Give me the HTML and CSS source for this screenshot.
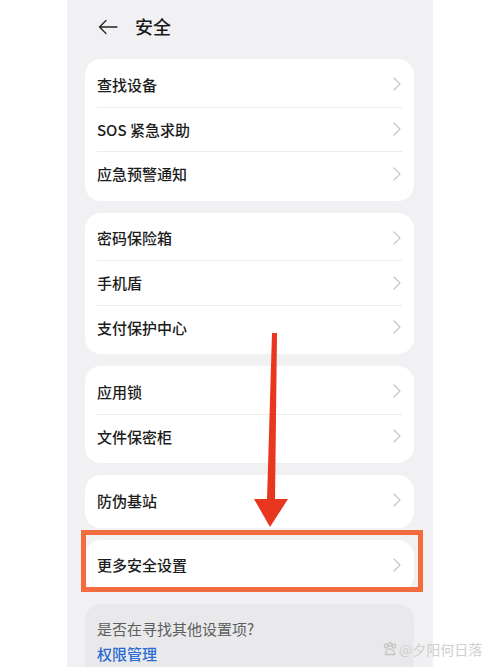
FILE: index.html
```html
<!DOCTYPE html>
<html>
<head>
<meta charset="utf-8">
<title>安全</title>
<link rel="stylesheet" href="styles.css">
</head>
<body>
	<div class="screen">
		<header class="topbar">
			<svg class="back" width="20" height="16" viewBox="0 0 20 16">
				<path d="M19 8H1.5M8 1.5L1.5 8 8 14.5" fill="none" stroke="#262626" stroke-width="1.3" stroke-linecap="round" stroke-linejoin="round"/>
			</svg>
			<h1>安全</h1>
		</header>

		<section class="group">
			<div class="row"><span>查找设备</span><svg class="chev" width="8" height="14" viewBox="0 0 8 14"><path d="M1 1l6 6-6 6"/></svg></div>
			<div class="row"><span>SOS 紧急求助</span><svg class="chev" width="8" height="14" viewBox="0 0 8 14"><path d="M1 1l6 6-6 6"/></svg></div>
			<div class="row"><span>应急预警通知</span><svg class="chev" width="8" height="14" viewBox="0 0 8 14"><path d="M1 1l6 6-6 6"/></svg></div>
		</section>

		<section class="group">
			<div class="row"><span>密码保险箱</span><svg class="chev" width="8" height="14" viewBox="0 0 8 14"><path d="M1 1l6 6-6 6"/></svg></div>
			<div class="row"><span>手机盾</span><svg class="chev" width="8" height="14" viewBox="0 0 8 14"><path d="M1 1l6 6-6 6"/></svg></div>
			<div class="row"><span>支付保护中心</span><svg class="chev" width="8" height="14" viewBox="0 0 8 14"><path d="M1 1l6 6-6 6"/></svg></div>
		</section>

		<section class="group">
			<div class="row"><span>应用锁</span><svg class="chev" width="8" height="14" viewBox="0 0 8 14"><path d="M1 1l6 6-6 6"/></svg></div>
			<div class="row"><span>文件保密柜</span><svg class="chev" width="8" height="14" viewBox="0 0 8 14"><path d="M1 1l6 6-6 6"/></svg></div>
		</section>

		<section class="group">
			<div class="row"><span>防伪基站</span><svg class="chev" width="8" height="14" viewBox="0 0 8 14"><path d="M1 1l6 6-6 6"/></svg></div>
		</section>

		<section class="group">
			<div class="row"><span>更多安全设置</span><svg class="chev" width="8" height="14" viewBox="0 0 8 14"><path d="M1 1l6 6-6 6"/></svg></div>
		</section>

		<section class="group hint">
			<div class="hint_title">是否在寻找其他设置项?</div>
			<div class="hint_link">权限管理</div>
		</section>
	</div>

	<!-- red pointer down to the last entry -->
	<svg class="pointer" width="500" height="667" viewBox="0 0 500 667">
		<polygon points="272,333 277,333 275,500 267,500" fill="#e8361f"/>
		<polygon points="254,499 288,499 270,527" fill="#e8361f"/>
	</svg>
	<div class="highlight"></div>

	<div class="watermark">
		<svg width="14" height="14" viewBox="0 0 14 14">
			<g fill="none" stroke="#c4c4c4" stroke-width="1.3">
				<ellipse cx="3" cy="4" rx="1.6" ry="2"/>
				<ellipse cx="7" cy="2.4" rx="1.6" ry="1.9"/>
				<ellipse cx="11" cy="4" rx="1.6" ry="2"/>
				<path d="M2.5 12.5c0-3.2 2-5.6 4.5-5.6s4.5 2.4 4.5 5.6z"/>
			</g>
		</svg>
		<span>@夕阳何日落</span>
	</div>
</body>
</html>
```

FILE: styles.css
```css
*
{
	box-sizing: border-box;
}

html, body
{
	margin: 0;
	padding: 0;
	height: 667px;
	overflow: hidden;
	background: #ffffff;
	font-family: "Noto Sans CJK SC", "Noto Sans", sans-serif;
}

.screen
{
	margin-left: 67px;
	width: 366px;
	height: 667px;
	padding: 0 19px 0 18px;
	background: #f1f1f3;
	overflow: hidden;
}

.topbar
{
	height: 52px;
	margin-bottom: 7px;
	padding-left: 13px;
	display: flex;
	align-items: center;
}

.topbar .back
{
	margin-right: 17px;
	margin-top: 2px;
}

.topbar h1
{
	margin: 0;
	font-size: 18px;
	font-weight: 500;
	color: #1a1a1a;
}

.group
{
	background: #ffffff;
	border-radius: 16px;
	padding: 3px 0 5px;
	margin-bottom: 12px;
}

.row
{
	height: 44.5px;
	margin: 0 12px;
	display: flex;
	align-items: center;
	justify-content: space-between;
	font-size: 15px;
	font-weight: 500;
	color: #1c1c1c;
}

.row + .row
{
	border-top: 1px solid #ebebeb;
}

.chev
{
	margin-right: 1px;
	fill: none;
	stroke: #c6c6c6;
	stroke-width: 1.3;
	stroke-linecap: round;
	stroke-linejoin: round;
}

.hint
{
	background: #e9e9eb;
	padding: 12px 12px;
}

.hint_title
{
	line-height: 25px;
	font-size: 15px;
	color: #5e5e5e;
}

.hint_link
{
	line-height: 25px;
	font-size: 15px;
	font-weight: 500;
	color: #2a6bd1;
}

.pointer
{
	position: absolute;
	left: 0;
	top: 0;
	pointer-events: none;
}

.highlight
{
	position: absolute;
	left: 81px;
	top: 530px;
	width: 342px;
	height: 62px;
	border: 5px solid #f36c3d;
}

.watermark
{
	position: absolute;
	left: 383px;
	top: 639px;
	display: flex;
	align-items: center;
	gap: 2px;
	font-size: 14px;
	color: #cfcfcf;
}
```
